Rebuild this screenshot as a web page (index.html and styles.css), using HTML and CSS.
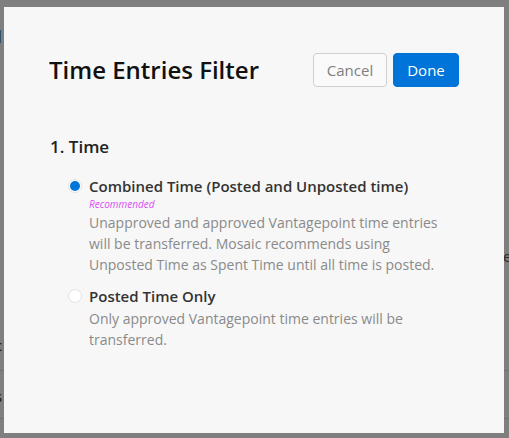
FILE: index.html
```html
<!DOCTYPE html>
<html>
<head>
<meta charset="utf-8">
<link rel="stylesheet" href="styles.css">
</head>
<body>
<div class="page">
  <span class="bg-frag frag-i">I</span>
  <span class="bg-frag frag-c">c</span>
  <span class="bg-frag frag-s">s</span>
  <span class="bg-frag frag-e">e</span>
  <div class="bg-line line-1"></div>
  <div class="bg-line line-2"></div>
</div>
<div class="overlay">
  <div class="modal">
    <div class="header">
      <h1 class="title">Time Entries Filter</h1>
      <div class="actions">
        <button class="btn btn-cancel">Cancel</button>
        <button class="btn btn-done">Done</button>
      </div>
    </div>
    <h2 class="section">1. Time</h2>
    <div class="options">
      <div class="option">
        <span class="radio checked"></span>
        <div class="option-body">
          <div class="option-label">Combined Time (Posted and Unposted time)</div>
          <div class="recommended">Recommended</div>
          <div class="option-desc">Unapproved and approved Vantagepoint time entries will be transferred. Mosaic recommends using Unposted Time as Spent Time until all time is posted.</div>
        </div>
      </div>
      <div class="option">
        <span class="radio"></span>
        <div class="option-body">
          <div class="option-label">Posted Time Only</div>
          <div class="option-desc">Only approved Vantagepoint time entries will be transferred.</div>
        </div>
      </div>
    </div>
  </div>
</div>
</body>
</html>
```
FILE: styles.css
```css
html, body {
  margin: 0;
  padding: 0;
  width: 509px;
  height: 438px;
  overflow: hidden;
  font-family: "Open Sans", "Noto Sans", sans-serif;
  background: #ffffff;
}
.page {
  position: relative;
  width: 509px;
  height: 438px;
}
.bg-frag {
  position: absolute;
  font-size: 15px;
  color: #333;
  line-height: 1;
}
.frag-i { left: -4px; top: 27px; font-size: 18px; font-weight: 700; color: #111; }
.frag-c { left: -5px; top: 338px; }
.frag-s { left: -5px; top: 389px; }
.frag-e { left: 503px; top: 249px; color: #555; }
.bg-line {
  position: absolute;
  left: 0;
  width: 509px;
  height: 1px;
  background: #e4e4e4;
}
.line-1 { top: 370px; }
.line-2 { top: 418px; }
.overlay {
  position: fixed;
  inset: 0;
  background: rgba(0, 0, 0, 0.5);
  padding: 7px 5px 5px 4px;
  box-sizing: border-box;
}
.modal {
  background: #f7f7f7;
  height: 100%;
  box-sizing: border-box;
  padding: 46px 45px 0 45px;
}
.header {
  display: flex;
  align-items: center;
  justify-content: space-between;
}
.title {
  margin: 0;
  font-size: 24px;
  font-weight: 600;
  color: #111;
  line-height: 34px;
}
.actions {
  display: flex;
  gap: 6px;
}
.btn {
  font-family: inherit;
  font-size: 15px;
  height: 34px;
  border-radius: 4px;
  padding: 0;
  cursor: pointer;
}
.btn-cancel {
  width: 74px;
  background: #fafafa;
  border: 1px solid #cfcfcf;
  color: #808080;
}
.btn-done {
  width: 66px;
  background: #0074d9;
  border: 1px solid #0074d9;
  color: #fff;
}
.section {
  margin: 48px 0 0 1px;
  font-size: 17px;
  font-weight: 600;
  color: #222;
  line-height: 24px;
}
.options {
  margin-top: 16px;
  padding-left: 19px;
  display: flex;
  flex-direction: column;
  gap: 10px;
}
.option {
  display: flex;
  gap: 7px;
}
.radio {
  flex: none;
  width: 14px;
  height: 14px;
  margin-top: 4px;
  border-radius: 50%;
  background: #fff;
  border: 1px solid #e2e2e2;
  box-sizing: border-box;
  position: relative;
}
.radio.checked::after {
  content: "";
  position: absolute;
  inset: 1px;
  border-radius: 50%;
  background: #0074d9;
}
.option-label {
  font-size: 15px;
  font-weight: 600;
  color: #333;
  line-height: 22px;
}
.recommended {
  font-size: 10px;
  font-style: italic;
  color: #d94ff5;
  line-height: 14px;
}
.option-desc {
  margin-top: 1px;
  font-size: 14px;
  color: #8a8a8a;
  line-height: 21px;
  width: 350px;
}
```
